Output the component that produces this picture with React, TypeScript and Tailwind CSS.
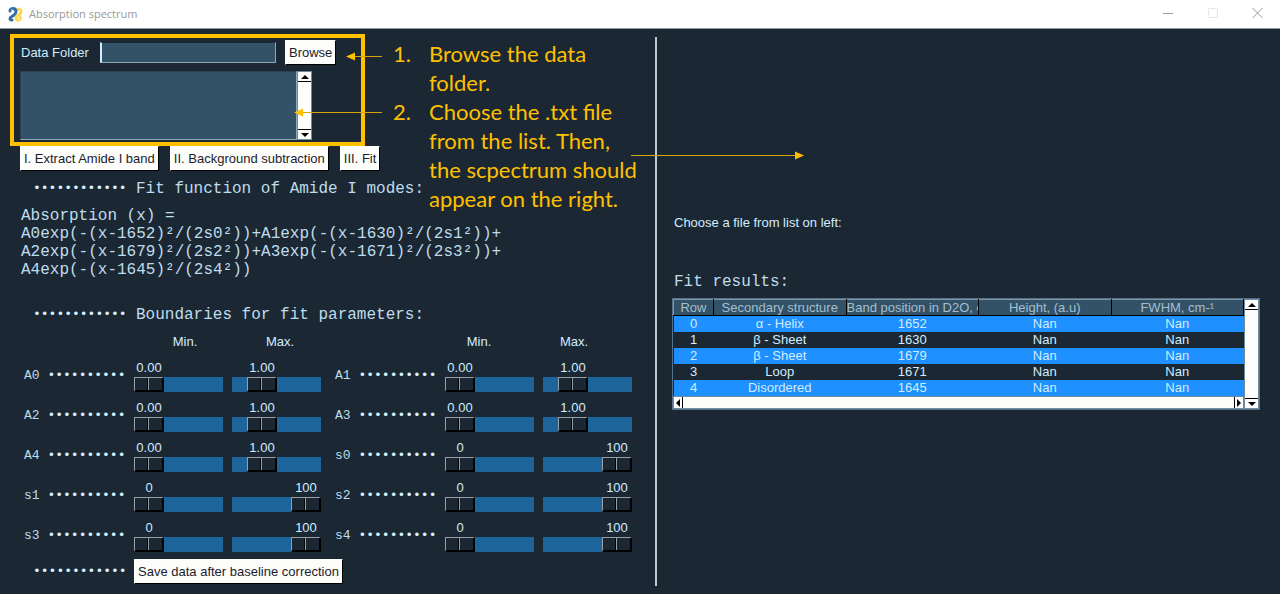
import { useState } from "react";

type ParamSpec = { name: string; start: number; limit: number; top: number; decimals: number };

const amplitude = (name: string): ParamSpec => ({ name, start: 0, limit: 1, top: 4, decimals: 2 });
const width = (name: string): ParamSpec => ({ name, start: 0, limit: 100, top: 100, decimals: 0 });

const parameters: ParamSpec[] = [
  amplitude("A0"),
  amplitude("A1"),
  amplitude("A2"),
  amplitude("A3"),
  amplitude("A4"),
  width("s0"),
  width("s1"),
  width("s2"),
  width("s3"),
  width("s4"),
];

const results = [
  ["0", "α - Helix", "1652", "Nan", "Nan"],
  ["1", "β - Sheet", "1630", "Nan", "Nan"],
  ["2", "β - Sheet", "1679", "Nan", "Nan"],
  ["3", "Loop", "1671", "Nan", "Nan"],
  ["4", "Disordered", "1645", "Nan", "Nan"],
];

const TRACK = 89;
const THUMB = 30;

function PythonIcon() {
  return (
    <svg viewBox="0 0 30 30" className="size-[15px]" fill="none" strokeLinecap="round" strokeLinejoin="round" aria-hidden="true">
      <path stroke="#ffd84a" strokeWidth="6" d="M19 5c3-2 7 0 7 4s-3 6-6 8-4 4-4 6 3 4 6 3 3-3 3-5" />
      <path stroke="#2f6fa6" strokeWidth="6" d="M4 8c0-3 3-5 6-5s6 2 6 6-2 6-5 8-7 3-7 6 1 3 4 3" />
      <circle cx="8" cy="6" r="1.3" fill="#ffffff" />
      <circle cx="22" cy="25" r="1.3" fill="#ffffff" />
    </svg>
  );
}

function TitleBar() {
  return (
    <header className="flex h-[29px] items-center justify-between border-b border-[#8f9ba3] bg-white pl-2 font-['Open_Sans','Noto_Sans',sans-serif]">
      <div className="flex items-center gap-[6px]">
        <PythonIcon />
        <h1 className="text-[11px] leading-4 text-[#999999]">Absorption spectrum</h1>
      </div>
      <div className="flex h-full text-[#999999]">
        <button type="button" aria-label="Minimize" className="grid w-[45px] place-items-center">
          <svg viewBox="0 0 12 12" className="size-3" stroke="currentColor" fill="none">
            <path d="M1 5.5h10" />
          </svg>
        </button>
        <button type="button" aria-label="Maximize" className="grid w-[45px] place-items-center text-[#e6e6e6]">
          <svg viewBox="0 0 12 12" className="size-3" stroke="currentColor" fill="none">
            <path d="M1.5 .5h9v9h-9z" />
          </svg>
        </button>
        <button type="button" aria-label="Close" className="grid w-[45px] place-items-center">
          <svg viewBox="0 0 12 12" className="size-3" stroke="currentColor" fill="none">
            <path d="M.5 0l10 10M10.5 0l-10 10" />
          </svg>
        </button>
      </div>
    </header>
  );
}

function PushButton({ children }: { children: string }) {
  return (
    <button
      type="button"
      className="h-[25px] border border-t-white border-r-black border-b-black border-l-white bg-[#fdfdfc] px-[3px] text-[13px] leading-4 whitespace-nowrap text-[#1c1c2a]"
    >
      {children}
    </button>
  );
}

function ScrollArrow({ label, d, className }: { label: string; d: string; className: string }) {
  return (
    <button type="button" aria-label={label} className={`grid shrink-0 place-items-center bg-[#fdfdfc] ${className}`}>
      <svg viewBox="0 0 8 8" className="size-2" fill="#000000" aria-hidden="true">
        <path d={d} />
      </svg>
    </button>
  );
}

function VerticalScrollbar() {
  return (
    <div className="flex w-[15px] shrink-0 flex-col border border-[#6f8ba0] bg-[#fdfdfc]">
      <ScrollArrow label="Scroll up" d="M4 2l4 4H0z" className="h-[10px] w-full border-b border-black" />
      <div className="flex-1" />
      <ScrollArrow label="Scroll down" d="M4 6L0 2h8z" className="h-[10px] w-full border-t border-black" />
    </div>
  );
}

function Dots({ count }: { count: number }) {
  return <span className="text-[#d9f0ff]">{"•".repeat(count)}</span>;
}

function SectionHeading({ children }: { children: string }) {
  return (
    <div className="flex h-5 items-center pl-[33px] font-['Liberation_Mono',monospace]">
      <span className="w-[103px] text-[13px] leading-5">
        <Dots count={12} />
      </span>
      <h2 className="text-base leading-5 whitespace-nowrap text-[#bfdcec]">{children}</h2>
    </div>
  );
}

function Scale({ label, initial, top, decimals }: { label: string; initial: number; top: number; decimals: number }) {
  const [value, setValue] = useState(initial);
  const offset = Math.round((value / top) * (TRACK - THUMB));
  return (
    <label className="flex h-8 w-[89px] flex-col">
      <output className="flex h-[17px] w-[30px] justify-center text-[13px] leading-4" style={{ marginLeft: offset }}>
        {value.toFixed(decimals)}
      </output>
      <input
        type="range"
        aria-label={label}
        min={0}
        max={top}
        step={decimals ? 0.01 : 1}
        value={value}
        onChange={(e) => setValue(Number(e.target.value))}
        className="m-0 block h-[15px] w-full appearance-none bg-[#1c6499] [&::-webkit-slider-thumb]:h-[15px] [&::-webkit-slider-thumb]:w-[30px] [&::-webkit-slider-thumb]:appearance-none [&::-webkit-slider-thumb]:border [&::-webkit-slider-thumb]:border-r-2 [&::-webkit-slider-thumb]:border-b-2 [&::-webkit-slider-thumb]:border-t-[#9a9fa3] [&::-webkit-slider-thumb]:border-r-black [&::-webkit-slider-thumb]:border-b-black [&::-webkit-slider-thumb]:border-l-[#9a9fa3] [&::-webkit-slider-thumb]:bg-[linear-gradient(90deg,#1b2834_12px,#000_12px,#000_13px,#9a9fa3_13px,#9a9fa3_14px,#1b2834_14px)]"
      />
    </label>
  );
}

function ParameterRow({ spec }: { spec: ParamSpec }) {
  return (
    <div className="flex h-8 gap-[9px]">
      <span className="flex w-[101px] items-center font-['Liberation_Mono',monospace] text-[13px] leading-4 whitespace-pre text-[#bfdcec]">
        {spec.name} <Dots count={10} />
      </span>
      <Scale label={`${spec.name} minimum`} initial={spec.start} top={spec.top} decimals={spec.decimals} />
      <Scale label={`${spec.name} maximum`} initial={spec.limit} top={spec.top} decimals={spec.decimals} />
    </div>
  );
}

function BoundLabels() {
  return (
    <div className="flex gap-[9px] text-center text-[13px] leading-4">
      <span className="w-[86px]">Min.</span>
      <span className="w-[86px]">Max.</span>
    </div>
  );
}

function Instructions() {
  return (
    <ol className="absolute top-[10px] left-[393px] w-[260px] font-[Lato,sans-serif] text-[22px] leading-[29px] text-[#ffc000]">
      <li className="flex">
        <span className="w-9 shrink-0">1.</span>
        <span>
          Browse the data
          <br />
          folder.
        </span>
      </li>
      <li className="flex">
        <span className="w-9 shrink-0">2.</span>
        <span className="whitespace-nowrap">
          Choose the .txt file
          <br />
          from the list. Then,
          <br />
          the scpectrum should
          <br />
          appear on the right.
        </span>
      </li>
    </ol>
  );
}

function Arrows() {
  return (
    <svg
      viewBox="0 0 520 140"
      className="pointer-events-none absolute top-0 left-[290px] h-[140px] w-[520px]"
      aria-hidden="true"
    >
      <g stroke="#d9a60a" fill="none">
        <path d="M64 27.5h28M12 83.5h80M341 126.5h165" />
      </g>
      <g fill="#ffc000">
        <path d="M56 27.5l9-4v8zM4 83.5l9-4v8zM514 126.5l-9-4v8z" />
      </g>
    </svg>
  );
}

function FitPanel() {
  return (
    <section className="w-[655px] shrink-0 pt-[5px]">
      <div className="ml-[10px] flex w-[355px] flex-col gap-[6px] border-4 border-[#ffc000] px-[6px] py-[2px]">
        <div className="flex items-center">
          <label htmlFor="data-folder" className="w-20 pl-[1px] text-[13px] leading-4">
            Data Folder
          </label>
          <input
            id="data-folder"
            type="text"
            className="mr-[9px] h-[21px] w-44 border border-l-2 border-t-[#1b2834] border-r-[#8fa9b8] border-b-[#8fa9b8] border-l-[#d1ecff] bg-[#335267] px-1 text-[13px] text-[#d1ecff] outline-none"
          />
          <PushButton>Browse</PushButton>
        </div>
        <div className="flex h-[69px] w-[292px]">
          <div
            role="listbox"
            aria-label="Data files"
            className="flex-1 border border-t-[#2a4153] border-r-[#8fa9b8] border-b-[#8fa9b8] border-l-[#2a4153] bg-[#335267]"
          />
          <VerticalScrollbar />
        </div>
      </div>
      <div className="flex gap-[11px] pl-5">
        <PushButton>I. Extract Amide I band</PushButton>
        <PushButton>II. Background subtraction</PushButton>
        <PushButton>III. Fit</PushButton>
      </div>
      <div className="pt-2">
        <SectionHeading>Fit function of Amide I modes:</SectionHeading>
      </div>
      <p className="pt-2 pl-[21px] font-['Liberation_Mono',monospace] text-base leading-[18px] whitespace-nowrap text-[#bfdcec]">
        Absorption (x) =
        <br />
        A0exp(-(x-1652)²/(2s0²))+A1exp(-(x-1630)²/(2s1²))+
        <br />
        A2exp(-(x-1679)²/(2s2²))+A3exp(-(x-1671)²/(2s3²))+
        <br />
        A4exp(-(x-1645)²/(2s4²))
      </p>
      <div className="pt-[26px]">
        <SectionHeading>Boundaries for fit parameters:</SectionHeading>
      </div>
      <div className="flex gap-[113px] pt-[9px] pl-[142px]">
        <BoundLabels />
        <BoundLabels />
      </div>
      <div className="grid w-fit grid-cols-2 gap-x-[14px] gap-y-2 pt-[10px] pl-6">
        {parameters.map((spec) => (
          <ParameterRow key={spec.name} spec={spec} />
        ))}
      </div>
      <div className="flex items-center pt-[7px] pl-[33px]">
        <span className="w-[101px] font-['Liberation_Mono',monospace] text-[13px] leading-4">
          <Dots count={12} />
        </span>
        <PushButton>Save data after baseline correction</PushButton>
      </div>
    </section>
  );
}

function ResultsTable() {
  const headings = ["Row", "Secondary structure", "Band position in D2O, cm-¹", "Height, (a.u)", "FWHM, cm-¹"];
  return (
    <div className="flex border border-[#56728a]">
      <div className="min-w-0 flex-1">
        <table className="w-full table-fixed border-collapse text-center text-[13px] leading-4">
          <colgroup>
            <col className="w-10" />
            <col />
            <col />
            <col />
            <col />
          </colgroup>
          <thead>
            <tr className="bg-[#335267] leading-[15px] text-[#a3bfd0]">
              {headings.map((heading) => (
                <th
                  key={heading}
                  scope="col"
                  className="overflow-hidden border border-t-[#8096a5] border-r-black border-b-black border-l-[#8096a5] p-0 font-normal whitespace-nowrap"
                >
                  {heading}
                </th>
              ))}
            </tr>
          </thead>
          <tbody>
            {results.map((row) => (
              <tr key={row[0]} className="h-4 text-[#d1ecff] odd:bg-[#1e90ff]">
                {row.map((cell, i) => (
                  <td key={i} className="p-0">
                    {cell}
                  </td>
                ))}
              </tr>
            ))}
          </tbody>
        </table>
        <div className="flex h-[13px] border border-[#6f8ba0] bg-[#fdfdfc]">
          <ScrollArrow label="Scroll left" d="M2 4l4-4v8z" className="h-full w-[9px] border-r border-black" />
          <div className="flex-1" />
          <ScrollArrow label="Scroll right" d="M6 4L2 0v8z" className="h-full w-[9px] border-l border-black" />
        </div>
      </div>
      <VerticalScrollbar />
    </div>
  );
}

function ResultsPanel() {
  return (
    <section className="min-w-0 flex-1 pt-[186px] pr-5 pl-[15px]">
      <p className="pl-[2px] text-[13px] leading-4">Choose a file from list on left:</p>
      <h2 className="pt-[41px] pb-[6px] pl-[2px] font-['Liberation_Mono',monospace] text-base leading-5 text-[#bfdcec]">
        Fit results:
      </h2>
      <ResultsTable />
    </section>
  );
}

export default function App() {
  return (
    <div className="flex min-h-screen flex-col bg-[#1b2834] font-['Liberation_Sans',Arial,sans-serif] text-[#d1ecff]">
      <TitleBar />
      <main className="relative flex flex-1">
        <FitPanel />
        <div className="my-2 w-[2px] shrink-0 bg-[#c3c8cc]" />
        <ResultsPanel />
        <Instructions />
        <Arrows />
      </main>
    </div>
  );
}
